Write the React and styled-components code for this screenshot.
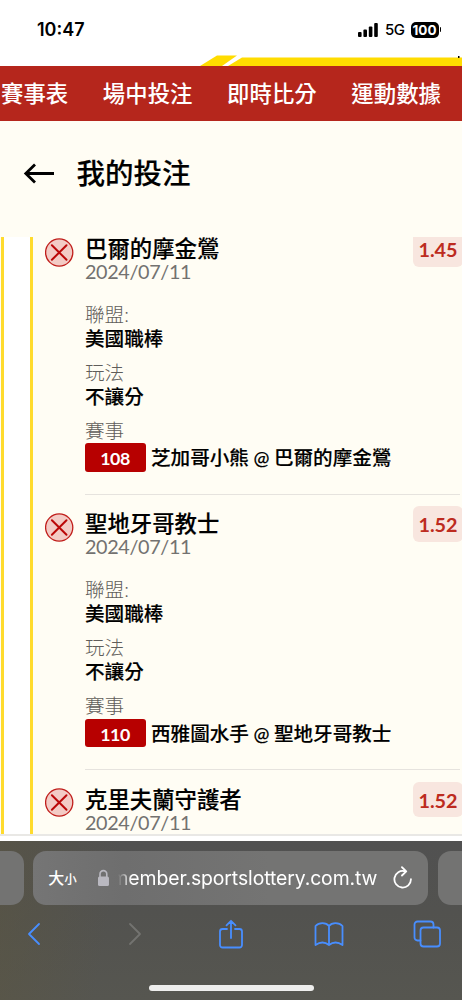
import React from "react";
import styled, { createGlobalStyle } from "styled-components";

const GlobalStyle = createGlobalStyle`
  * {
    box-sizing: border-box;
  }
  body {
    margin: 0;
    background: #fffdf4;
    font-family: Lato, "Noto Sans CJK TC", sans-serif;
    color: #000;
  }
`;

const Screen = styled.div`
  width: 462px;
  height: 1000px;
  display: flex;
  flex-direction: column;
  overflow: hidden;
`;

const StatusBar = styled.div`
  height: 55px;
  flex: none;
  padding: 4px 21px 0 37px;
  display: flex;
  align-items: center;
  background: #fff;
  font-family: Inter, "Liberation Sans", sans-serif;
`;

const Clock = styled.div`
  flex: 1;
  font-size: 18px;
  font-weight: 600;
`;

const Network = styled.div`
  margin: 0 6px 0 7px;
  font-size: 15px;
  font-weight: 500;
  letter-spacing: -0.5px;
`;

const Battery = styled.div`
  width: 28px;
  height: 16px;
  border-radius: 5px;
  background: #000;
  color: #fff;
  font-size: 13.5px;
  font-weight: 700;
  line-height: 16px;
  text-align: center;
`;

const BatteryCap = styled.div`
  width: 1.5px;
  height: 5px;
  margin-left: 1px;
  border-radius: 0 2px 2px 0;
  background: #000;
`;

const Stripe = styled.svg`
  display: block;
  flex: none;
  background: #fff;
`;

const Nav = styled.nav`
  height: 55px;
  flex: none;
  padding-left: 1px;
  display: flex;
  align-items: center;
  gap: 34.7px;
  background: #b5261c;
  white-space: nowrap;
`;

const NavItem = styled.span`
  color: #fff;
  font-size: 22.4px;
  font-weight: 500;
  line-height: 30px;
`;

const PageHeader = styled.header`
  height: 116px;
  flex: none;
  padding: 0 0 12px 23px;
  display: flex;
  align-items: center;
  gap: 21.5px;
`;

const PageTitle = styled.h1`
  margin: 0;
  font-size: 28.5px;
  font-weight: 500;
  line-height: 40px;
  -webkit-text-stroke: 0.15px #000;
`;

const Bets = styled.main`
  height: 597px;
  flex: none;
  display: flex;
  overflow: hidden;
`;

const Rail = styled.div`
  width: 32px;
  flex: none;
  margin-left: 1px;
  border-left: 3px solid #ffdb2d;
  border-right: 3px solid #ffdb2d;
  background: #fff;
`;

const BetList = styled.div`
  flex: 1;
  margin-top: -6px;
  padding-left: 12px;
`;

const Bet = styled.div`
  height: 275.3px;
  display: flex;
`;

const LostIcon = styled.svg`
  flex: none;
  margin-top: 6.5px;
`;

const BetBody = styled.div`
  flex: 1;
  height: 264px;
  margin: 0 2px 0 11px;
  border-bottom: 1.5px solid #e6e3de;
`;

const BetTop = styled.div`
  display: flex;
  justify-content: space-between;
  margin-right: -3px;
`;

const Team = styled.div`
  padding-top: 5px;
  font-size: 22.4px;
  font-weight: 500;
  line-height: 26px;
  -webkit-text-stroke: 0.15px #000;
`;

const BetDate = styled.div`
  margin-top: -1px;
  color: #737270;
  font-size: 19.8px;
  line-height: 20px;
  letter-spacing: -0.35px;
`;

const Odds = styled.div`
  width: 50px;
  height: 35.5px;
  border-radius: 6px;
  background: #f8e6df;
  color: #bd2b20;
  font-size: 19.8px;
  font-weight: 700;
  line-height: 36px;
  text-align: center;
`;

const Details = styled.dl`
  margin: 22px 0 0;
  display: flex;
  flex-direction: column;
  gap: 10px;
`;

const Label = styled.dt`
  color: #5f5d5a;
  font-size: 19.6px;
  font-weight: 300;
  line-height: 24px;
`;

const Value = styled.dd`
  margin: 0;
  height: 24px;
  font-size: 19.6px;
  font-weight: 500;
  line-height: 24px;
  -webkit-text-stroke: 0.15px #000;
`;

const Match = styled(Value)`
  height: 29px;
  display: flex;
  align-items: center;
  gap: 5.5px;
  margin-left: -0.5px;
  white-space: nowrap;
`;

const MatchNo = styled.span`
  width: 61px;
  height: 28.5px;
  border-radius: 3px;
  background: #b70000;
  color: #fff;
  font-size: 17.8px;
  font-weight: 700;
  line-height: 30px;
  letter-spacing: -0.5px;
  text-align: center;
  -webkit-text-stroke: 0;
`;

const MatchTeams = styled.span`
  padding-top: 1.5px;
`;

const At = styled.span`
  margin: 0 4.5px;
  font-size: 19px;
`;

const PageEnd = styled.div`
  height: 7px;
  flex: none;
  border-top: 2px solid #e9e8e5;
  background: #fff;
`;

const Browser = styled.footer`
  height: 159px;
  flex: none;
  background: linear-gradient(100deg, rgba(92, 86, 62, 0.5), rgba(86, 86, 82, 0) 25%),
    linear-gradient(#515151, #52524f 45%, #565650);
`;

const Tabs = styled.div`
  padding-top: 10px;
  display: grid;
  grid-template-columns: 23.5px 395px 24px;
  gap: 9.75px;
`;

const SideTab = styled.div`
  height: 53.5px;
  border-radius: ${(props) => (props.$left ? "0 13px 13px 0" : "13px 0 0 13px")};
  background: #737372;
`;

const AddressBar = styled.div`
  height: 53.5px;
  padding: 0 15px 0 15px;
  display: flex;
  align-items: center;
  border-radius: 13px;
  background: linear-gradient(90deg, #757575, #6e6e6e 23%, #747473 60%);
  color: #fff;
`;

const TextSize = styled.div`
  width: 49px;
  margin-top: -2px;
  font-family: "Noto Sans CJK TC", sans-serif;
  font-size: 16px;
  font-weight: 500;

  small {
    font-size: 12.5px;
  }
`;

const Url = styled.div`
  width: 260px;
  margin: 0 16px 0 8px;
  display: flex;
  justify-content: flex-end;
  overflow: hidden;
  font-family: Inter, "Liberation Sans", sans-serif;
  font-size: 19.4px;
  line-height: 28px;
  letter-spacing: -0.1px;
  mask-image: linear-gradient(90deg, transparent, #000 14px);
`;

const Toolbar = styled.div`
  height: 58px;
  margin-left: -15px;
  display: grid;
  grid-template-columns: repeat(5, 98px);
  align-items: center;
  justify-items: center;
  color: #488eff;
`;

const ToolIcon = styled.svg`
  display: block;
  margin-left: ${(props) => props.$shift || 0}px;
  fill: none;
  stroke: ${(props) => props.$color || "currentColor"};
  stroke-width: 1.8;
  stroke-linecap: round;
  stroke-linejoin: round;
`;

const HomeIndicator = styled.div`
  width: 165px;
  height: 6px;
  margin: 22px auto 0 148.5px;
  border-radius: 3px;
  background: #eeeeed;
`;

const navItems = ["賽事表", "場中投注", "即時比分", "運動數據"];

const bets = [
  { id: "108", team: "巴爾的摩金鶯", away: "芝加哥小熊", home: "巴爾的摩金鶯", odds: "1.45" },
  { id: "110", team: "聖地牙哥教士", away: "西雅圖水手", home: "聖地牙哥教士", odds: "1.52" },
  { id: "111", team: "克里夫蘭守護者", odds: "1.52" },
];

function BetItem({ bet }) {
  return (
    <Bet>
      <LostIcon width="29" height="29" viewBox="0 0 29 29">
        <circle cx="14.2" cy="14.5" r="13.6" fill="#f3cbc5" stroke="#c01d1a" strokeWidth="1.3" />
        <path d="M6.9 7.2l14.6 14.6M21.5 7.2L6.9 21.8" stroke="#bb0808" strokeWidth="2" strokeLinecap="round" />
      </LostIcon>
      <BetBody>
        <BetTop>
          <div>
            <Team>{bet.team}</Team>
            <BetDate>2024/07/11</BetDate>
          </div>
          <Odds>{bet.odds}</Odds>
        </BetTop>
        {bet.home && (
          <Details>
            <div>
              <Label>聯盟:</Label>
              <Value>美國職棒</Value>
            </div>
            <div>
              <Label>玩法</Label>
              <Value>不讓分</Value>
            </div>
            <div>
              <Label>賽事</Label>
              <Match>
                <MatchNo>{bet.id}</MatchNo>
                <MatchTeams>
                  {bet.away}
                  <At>@</At>
                  {bet.home}
                </MatchTeams>
              </Match>
            </div>
          </Details>
        )}
      </BetBody>
    </Bet>
  );
}

export default function App() {
  return (
    <>
      <GlobalStyle />
      <Screen>
        <StatusBar>
          <Clock>10:47</Clock>
          <svg width="20" height="14" viewBox="0 0 20 14">
            <rect x="0" y="9" width="3.6" height="5" rx="1" />
            <rect x="5.4" y="6.5" width="3.6" height="7.5" rx="1" />
            <rect x="10.8" y="3.5" width="3.6" height="10.5" rx="1" />
            <rect x="16.2" y="0" width="3.6" height="14" rx="1" />
          </svg>
          <Network>5G</Network>
          <Battery>100</Battery>
          <BatteryCap />
        </StatusBar>
        <Stripe width="462" height="11" viewBox="0 0 462 11">
          <path d="M200 11L217 .5H237L222 11z" fill="#ffdc00" />
          <path d="M228 11L242 2.5H462V11z" fill="#ffdc00" />
          <rect x="458" y="1" width="1.5" height="2" />
        </Stripe>
        <Nav>
          {navItems.map((item) => (
            <NavItem key={item}>{item}</NavItem>
          ))}
        </Nav>
        <PageHeader>
          <svg width="32" height="22" viewBox="0 0 32 22" fill="none" stroke="#000" strokeWidth="2.8">
            <path d="M2.5 11.5H31M12 2.5L2.8 11.5L12 20.5" />
          </svg>
          <PageTitle>我的投注</PageTitle>
        </PageHeader>
        <Bets>
          <Rail />
          <BetList>
            {bets.map((bet) => (
              <BetItem key={bet.id} bet={bet} />
            ))}
          </BetList>
        </Bets>
        <PageEnd />
        <Browser>
          <Tabs>
            <SideTab $left />
            <AddressBar>
              <TextSize>
                大<small>小</small>
              </TextSize>
              <svg width="13" height="18" viewBox="0 0 13 18" fill="none">
                <path d="M3 9V5a3.4 3.4 0 0 1 6.8 0v4" stroke="#b9b8c0" strokeWidth="1.6" />
                <rect x="1" y="7.5" width="11" height="9.5" rx="1.6" fill="#b9b8c0" />
              </svg>
              <Url>member.sportslottery.com.tw</Url>
              <svg width="20" height="23" viewBox="0 0 20 23" fill="none" stroke="#fff" strokeWidth="1.8" strokeLinecap="round" strokeLinejoin="round">
                <path d="M12 5.3A8.3 8.3 0 1 0 18 13.2M9 1.2L13.3 5.3L9 9.5" />
              </svg>
            </AddressBar>
            <SideTab />
          </Tabs>
          <Toolbar>
            <ToolIcon width="16" height="24" viewBox="0 0 16 24">
              <path d="M13 2L3 12L13 22" />
            </ToolIcon>
            <ToolIcon width="16" height="24" viewBox="0 0 16 24" $color="#737370" $shift={5}>
              <path d="M3 2L13 12L3 22" />
            </ToolIcon>
            <ToolIcon width="26" height="30" viewBox="0 0 26 30" $shift={2}>
              <path d="M9 10H4.5A2.5 2.5 0 0 0 2 12.5V26A2.5 2.5 0 0 0 4.5 28.500H21.500A2.500 2.500 0 0 0 24 26V12.500A2.500 2.500 0 0 0 21.500 10H17M13 19V2M8.500 6.300L13 1.800L17.500 6.300" />
            </ToolIcon>
            <ToolIcon width="30" height="26" viewBox="0 0 30 26" $shift={1}>
              <path d="M15 24C11 20.800 6 20.800 1.500 24V5C5 1.200 12 1.200 15 5C18 1.200 25 1.200 28.500 5V24C24 20.800 19 20.800 15 24zM15 5V24" />
            </ToolIcon>
            <ToolIcon width="28" height="28" viewBox="0 0 28 28" $shift={1}>
              <rect x="7.5" y="7.5" width="19.5" height="19" rx="3" />
              <path d="M7.5 20.5H4.5A3 3 0 0 1 1.5 17.5V4.5A3 3 0 0 1 4.5 1.5H17.5A3 3 0 0 1 20.5 4.5V7.5" />
            </ToolIcon>
          </Toolbar>
          <HomeIndicator />
        </Browser>
      </Screen>
    </>
  );
}
